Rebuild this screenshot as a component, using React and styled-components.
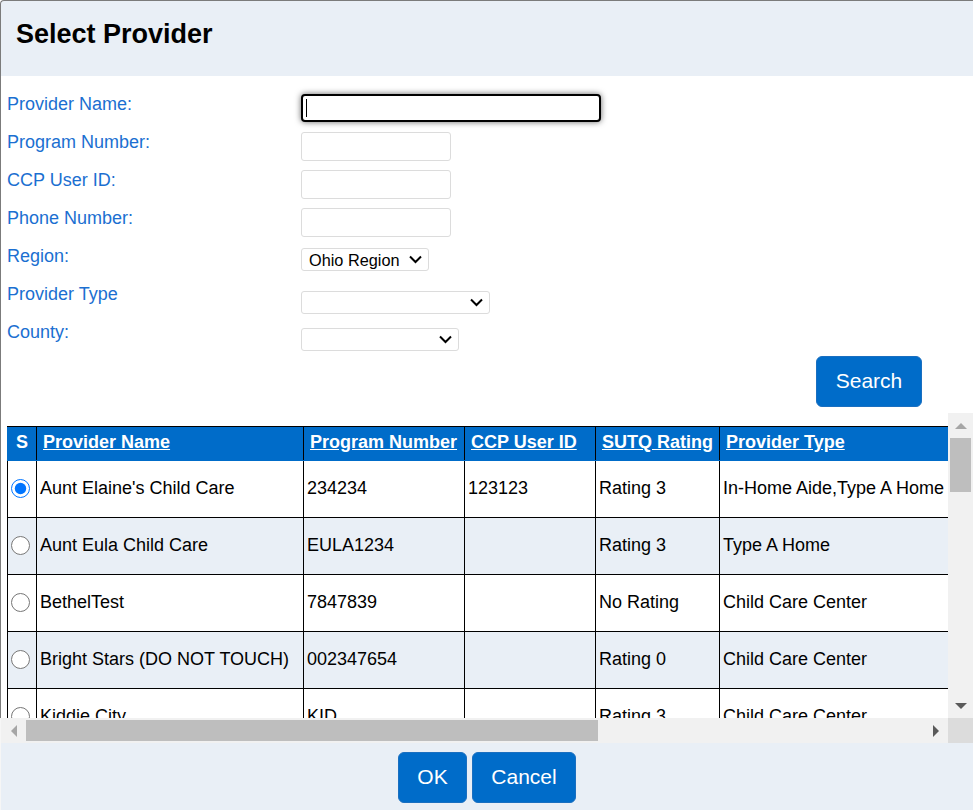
import React from 'react';
import styled, {createGlobalStyle, css} from 'styled-components';

const GlobalStyle = createGlobalStyle`
  html, body {
    margin: 0;
    padding: 0;
    background: #fff;
    overflow: hidden;
  }
  body, input, select, button, table {
    font-family: "Liberation Sans", Arial, sans-serif;
  }
`;

const darkEdge = css`
  border-left: 1px solid #7b7b7b;
`;

const lightEdge = css`
  border-left: 1px solid #f6f6f6;
`;

const Dialog = styled.div`
  width: 973px;
  height: 810px;
  display: flex;
  flex-direction: column;
  overflow: hidden;
`;

const TitleBar = styled.div`
  ${darkEdge};
  height: 76px;
  flex: none;
  box-sizing: border-box;
  padding: 16px 15px;
  background: #e9eff6;
  border-top: 1px solid #7b7b7b;
  border-top-left-radius: 4px;

  h1 {
    margin: 0;
    font-size: 27px;
    line-height: 35px;
    font-weight: bold;
    color: #000;
  }
`;

const Form = styled.div`
  ${darkEdge};
  padding: 18px 0 0 6px;
`;

const FormRow = styled.div`
  display: flex;
  height: 38px;

  &:last-child {
    height: 34px;
  }
`;

const Label = styled.label`
  flex: none;
  width: 294px;
  font-size: 18px;
  line-height: 20px;
  color: #1b6fd1;
`;

const TextInput = styled.input`
  box-sizing: border-box;
  width: 150px;
  height: 29px;
  padding: 0 4px;
  background: #fff;
  border: 1px solid #dcdcdc;
  border-radius: 3px;
  outline: none;
`;

const FocusedInput = styled(TextInput)`
  width: 300px;
  height: 28px;
  border: 2px solid #000;
  border-radius: 4px;
  background: linear-gradient(#000, #000) no-repeat 3px center / 1px 18px, #fff;
  box-shadow: 0 0 6px rgba(0, 0, 0, 0.6);
  caret-color: transparent;
`;

const SelectWrap = styled.div`
  position: relative;
  width: ${p => p.$width}px;
  height: 23px;
  margin-top: ${p => p.$top}px;

  svg {
    position: absolute;
    top: 7px;
    right: 7px;
    pointer-events: none;
  }
`;

const Select = styled.select`
  appearance: none;
  display: block;
  box-sizing: border-box;
  width: 100%;
  height: 100%;
  padding: 0 3px 0 7px;
  font-size: 16.3px;
  color: #000;
  background: #fff;
  border: 1px solid #dcdcdc;
  border-radius: 3px;
`;

const SearchRow = styled.div`
  ${darkEdge};
  display: flex;
  justify-content: flex-end;
  height: 57px;
  padding-right: 51px;
`;

const Button = styled.button`
  box-sizing: border-box;
  width: ${p => p.$width}px;
  height: 51px;
  padding: 0 0 2px;
  font-size: 21px;
  color: #fff;
  background: #006cc9;
  border: 1px solid #1a6fc0;
  border-radius: 6px;
`;

const ScrollArea = styled.div`
  display: grid;
  grid-template-columns: 948px 25px;
  grid-template-rows: 305px 25px;
  flex: none;
`;

const Viewport = styled.div`
  ${darkEdge};
  overflow: hidden;
  padding: 13px 0 0 6px;
  box-sizing: border-box;
`;

const Table = styled.table`
  table-layout: fixed;
  width: 1500px;
  border-collapse: collapse;
  font-size: 18px;
  color: #000;

  th, td {
    border: 1px solid #000;
    padding: 0 3px 2px;
    text-align: left;
    white-space: nowrap;
    overflow: hidden;
  }

  th {
    height: 31px;
    background: #006cc9;
    color: #fff;
    font-weight: bold;
    padding: 0 6px 2px;
    border-bottom-color: #006cc9;
  }

  th:first-child {
    text-align: center;
    padding: 0 0 2px;
    border-left-color: #006cc9;
  }

  th a {
    color: #fff;
    text-decoration: underline;
  }

  td {
    height: 54px;
  }

  td:first-child {
    padding: 0;
    text-align: center;
  }

  tbody tr:nth-child(even) td {
    background: #e9eff6;
  }
`;

const Radio = styled.input.attrs({type: 'radio', name: 'provider'})`
  width: 19px;
  height: 19px;
  margin: 0 3px 2px 0;
  vertical-align: middle;
`;

const VTrack = styled.div`
  background: #f1f1f1;
  display: flex;
  flex-direction: column;
  align-items: center;
`;

const HTrack = styled.div`
  ${lightEdge};
  background: #f1f1f1;
  display: flex;
  align-items: center;
`;

const Arrow = styled.div`
  flex: none;
  width: 25px;
  height: 25px;
  display: flex;
  align-items: center;
  justify-content: center;
  color: ${p => p.$color};

  svg {
    display: block;
    fill: currentColor;
  }
`;

const VThumb = styled.div`
  width: 21px;
  height: 54px;
  background: #bebebe;
`;

const Spacer = styled.div`
  flex: 1;
`;

const HThumb = styled.div`
  width: 572px;
  height: 21px;
  background: #bebebe;
`;

const Corner = styled.div`
  background: #dcdcdc;
`;

const Footer = styled.div`
  ${lightEdge};
  flex: 1;
  display: flex;
  justify-content: center;
  gap: 5px;
  padding: 9px 0 0 0;
  background: #e9eff6;
`;

const rows = [
    ["Aunt Elaine's Child Care", '234234', '123123', 'Rating 3', 'In-Home Aide,Type A Home'],
    ['Aunt Eula Child Care', 'EULA1234', '', 'Rating 3', 'Type A Home'],
    ['BethelTest', '7847839', '', 'No Rating', 'Child Care Center'],
    ['Bright Stars (DO NOT TOUCH)', '002347654', '', 'Rating 0', 'Child Care Center'],
    ['Kiddie City', 'KID', '', 'Rating 3', 'Child Care Center'],
];

const headers = ['Provider Name', 'Program Number', 'CCP User ID', 'SUTQ Rating', 'Provider Type'];

const Triangle = ({points, color}) => (
    <Arrow $color={color}>
        <svg width="12" height="12" viewBox="0 0 12 12"><polygon points={points}/></svg>
    </Arrow>
);

const Chevron = () => (
    <svg width="13" height="9" viewBox="0 0 13 9" fill="none" stroke="#000" strokeWidth="2">
        <path d="M1 1.5 L6.5 7 L12 1.5"/>
    </svg>
);

const App = () => {
    return (
        <Dialog>
            <GlobalStyle/>
            <TitleBar><h1>Select Provider</h1></TitleBar>
            <Form>
                <FormRow><Label>Provider Name:</Label><FocusedInput/></FormRow>
                <FormRow><Label>Program Number:</Label><TextInput/></FormRow>
                <FormRow><Label>CCP User ID:</Label><TextInput/></FormRow>
                <FormRow><Label>Phone Number:</Label><TextInput/></FormRow>
                <FormRow>
                    <Label>Region:</Label>
                    <SelectWrap $width={128} $top={2}>
                        <Select><option>Ohio Region</option></Select>
                        <Chevron/>
                    </SelectWrap>
                </FormRow>
                <FormRow>
                    <Label>Provider Type</Label>
                    <SelectWrap $width={189} $top={7}>
                        <Select><option></option></Select>
                        <Chevron/>
                    </SelectWrap>
                </FormRow>
                <FormRow>
                    <Label>County:</Label>
                    <SelectWrap $width={158} $top={6}>
                        <Select><option></option></Select>
                        <Chevron/>
                    </SelectWrap>
                </FormRow>
            </Form>
            <SearchRow><Button $width={106}>Search</Button></SearchRow>
            <ScrollArea>
                <Viewport>
                    <Table>
                        <colgroup>
                            <col width="29"/>
                            <col width="267"/>
                            <col width="161"/>
                            <col width="131"/>
                            <col width="124"/>
                            <col width="788"/>
                        </colgroup>
                        <thead>
                            <tr>
                                <th>S</th>
                                {headers.map(h => <th key={h}><a>{h}</a></th>)}
                            </tr>
                        </thead>
                        <tbody>
                            {rows.map((r, i) => (
                                <tr key={r[0]}>
                                    <td><Radio defaultChecked={i === 0}/></td>
                                    {r.map((c, j) => <td key={j}>{c}</td>)}
                                </tr>
                            ))}
                        </tbody>
                    </Table>
                </Viewport>
                <VTrack>
                    <Triangle points="0,9 12,9 6,3" color="#a6a6a6"/>
                    <VThumb/>
                    <Spacer/>
                    <Triangle points="0,3 12,3 6,9" color="#5a5a5a"/>
                </VTrack>
                <HTrack>
                    <Triangle points="9,0 9,12 3,6" color="#a6a6a6"/>
                    <HThumb/>
                    <Spacer/>
                    <Triangle points="3,0 3,12 9,6" color="#5a5a5a"/>
                </HTrack>
                <Corner/>
            </ScrollArea>
            <Footer>
                <Button $width={69}>OK</Button>
                <Button $width={104}>Cancel</Button>
            </Footer>
        </Dialog>
    );
};

export default App;
